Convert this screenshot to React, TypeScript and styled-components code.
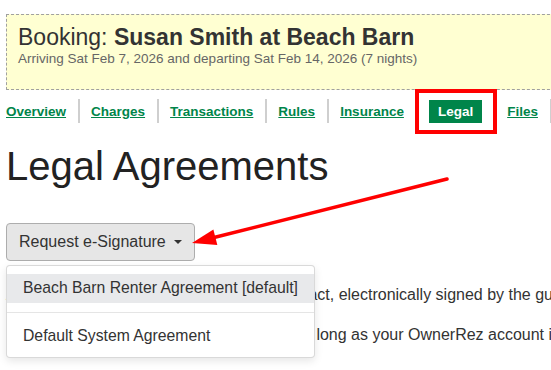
import styled, { createGlobalStyle } from "styled-components";

const GlobalStyle = createGlobalStyle`
    html, body {
        margin: 0;
        padding: 0;
        background: #fff;
        overflow: hidden;
    }
    body {
        font-family: "Liberation Sans", Arial, sans-serif;
        color: #333;
    }
`;

const green = "#00854a";

const Page = styled.div`
    position: relative;
    width: 551px;
    height: 370px;
    overflow: hidden;
    padding: 14px 6px 0;
    box-sizing: border-box;
`;

const BookingHeader = styled.div`
    box-sizing: border-box;
    height: 76px;
    margin-right: -40px;
    padding: 9px 11px 0;
    border: 1px dashed #a0a0a0;
    background: #ffffd2;
`;

const Title = styled.h2`
    margin: 0;
    font-size: 23px;
    line-height: 26px;
    font-weight: normal;
    color: #333;
    white-space: nowrap;

    strong {
        font-weight: bold;
    }
`;

const Subtitle = styled.div`
    font-size: 13.5px;
    line-height: 18px;
    color: #666;
    white-space: nowrap;
`;

const TabBar = styled.nav`
    display: flex;
    align-items: center;
    margin-top: 9px;
    white-space: nowrap;

    & > * {
        flex-shrink: 0;
    }
`;

const Tab = styled.a<{ $active?: boolean }>`
    position: relative;
    display: block;
    font-size: 13.5px;
    line-height: 17px;
    font-weight: bold;
    padding: ${p => (p.$active ? "3px 9px" : "3px 0")};
    color: ${p => (p.$active ? "#fff" : green)};
    background: ${p => (p.$active ? green : "transparent")};
    text-decoration: ${p => (p.$active ? "none" : "underline")};
    cursor: pointer;
`;

const Separator = styled.span`
    display: block;
    width: 2px;
    height: 24px;
    margin: 0 11px 0 12px;
    background: #cfcfcf;
`;

const Highlight = styled.span`
    position: absolute;
    left: -14px;
    right: -15px;
    top: -11px;
    bottom: -11px;
    border: 4px solid #ff0000;
    pointer-events: none;
`;

const Heading = styled.h1`
    margin: 21px 0 0;
    font-size: 40px;
    line-height: 44px;
    font-weight: normal;
    color: #222;
    white-space: nowrap;
`;

const Actions = styled.div`
    margin-top: 35px;
`;

const DropdownWrap = styled.div`
    position: relative;
    display: inline-block;
`;

const DropButton = styled.button`
    display: flex;
    align-items: center;
    font-family: inherit;
    font-size: 16px;
    line-height: 24px;
    padding: 6px 12px;
    color: #333;
    background: #e6e6e6;
    border: 1px solid #adadad;
    border-radius: 4px;
    cursor: pointer;
`;

const Caret = styled.span`
    display: inline-block;
    width: 0;
    height: 0;
    margin-left: 8px;
    border-top: 4px solid #333;
    border-left: 4px solid transparent;
    border-right: 4px solid transparent;
`;

const Menu = styled.ul`
    position: absolute;
    z-index: 2;
    top: calc(100% + 4px);
    left: 0;
    margin: 0;
    padding: 8px 0 6px;
    list-style: none;
    white-space: nowrap;
    background: #fff;
    border: 1px solid rgba(0, 0, 0, 0.15);
    border-radius: 4px;
    box-shadow: 0 3px 8px rgba(0, 0, 0, 0.1);
`;

const MenuItem = styled.li<{ $active?: boolean }>`
    padding: 3px 16px;
    font-size: 15.75px;
    line-height: 22.85px;
    color: #333;
    background: ${p => (p.$active ? "#e8e9eb" : "transparent")};
`;

const MenuDivider = styled.li`
    height: 1px;
    margin: 9px 0;
    background: #e5e5e5;
`;

const Para = styled.p<{ $gap: number }>`
    margin: ${p => p.$gap}px 0 0;
    font-size: 16px;
    line-height: 22.85px;
    color: #333;
    white-space: nowrap;
`;

const Annotation = styled.svg`
    position: absolute;
    left: 0;
    top: 0;
    z-index: 3;
    pointer-events: none;
`;

const tabs = ["Overview", "Charges", "Transactions", "Rules", "Insurance", "Legal", "Files"];

export default function App() {
    return (
        <Page>
            <GlobalStyle />
            <BookingHeader>
                <Title>
                    Booking: <strong>Susan Smith at Beach Barn</strong>
                </Title>
                <Subtitle>Arriving Sat Feb 7, 2026 and departing Sat Feb 14, 2026 (7 nights)</Subtitle>
            </BookingHeader>

            <TabBar>
                {tabs.map((t, i) => [
                    i > 0 && <Separator key={t + "-sep"} />,
                    <Tab key={t} $active={t === "Legal"}>
                        {t}
                        {t === "Legal" && <Highlight />}
                    </Tab>,
                ])}
                <Separator />
            </TabBar>

            <Heading>Legal Agreements</Heading>

            <Actions>
                <DropdownWrap>
                    <DropButton>
                        Request e-Signature
                        <Caret />
                    </DropButton>
                    <Menu>
                        <MenuItem $active>Beach Barn Renter Agreement [default]</MenuItem>
                        <MenuDivider />
                        <MenuItem>Default System Agreement</MenuItem>
                    </Menu>
                </DropdownWrap>
            </Actions>

            <Para $gap={23}>
                A booking has a rental agreement, or contract, electronically signed by the guest before arrival.
            </Para>
            <Para $gap={17}>
                Signed agreements are stored safely for as long as your OwnerRez account is active.
            </Para>

            <Annotation width="551" height="370" viewBox="0 0 551 370">
                <line x1="447" y1="179" x2="210" y2="238.5" stroke="#f00" strokeWidth="3.5" strokeLinecap="round" />
                <polygon points="192,243 213.4,229.4 217.3,245" fill="#f00" />
            </Annotation>
        </Page>
    );
}
